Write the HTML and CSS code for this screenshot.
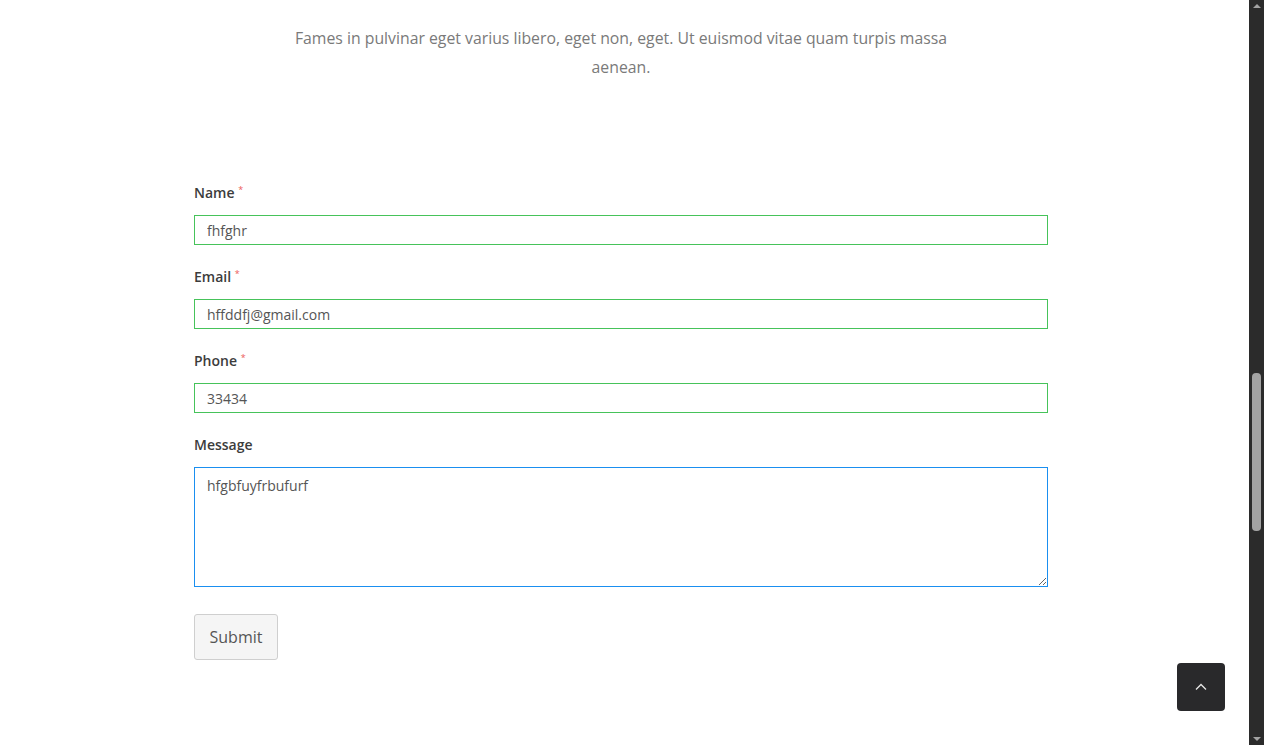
FILE: index.html
```html
<!DOCTYPE html>
<html lang="en">
<head>
<meta charset="utf-8">
<title>Contact</title>
<link rel="stylesheet" href="styles.css">
</head>
<body>
<div class="screen">
  <main class="page">
    <section class="intro">
      <p class="lead">Fames in pulvinar eget varius libero, eget non, eget. Ut euismod vitae quam turpis massa aenean.</p>
    </section>
    <form class="form">
      <div class="field">
        <label class="label">Name <span class="req">*</span></label>
        <input class="input valid" type="text" value="fhfghr">
      </div>
      <div class="field">
        <label class="label">Email <span class="req">*</span></label>
        <input class="input valid" type="text" value="hffddfj@gmail.com">
      </div>
      <div class="field">
        <label class="label">Phone <span class="req">*</span></label>
        <input class="input valid" type="text" value="33434">
      </div>
      <div class="field">
        <label class="label">Message</label>
        <textarea class="textarea">hfgbfuyfrbufurf</textarea>
      </div>
      <button class="submit" type="button">Submit</button>
    </form>
    <button class="to-top" type="button" aria-label="Back to top">
      <svg width="12" height="8" viewBox="0 0 12 8"><path d="M1 6.5 L6 1.5 L11 6.5" fill="none" stroke="#e6e6e6" stroke-width="1.3"/></svg>
    </button>
  </main>
  <div class="scrollbar">
    <div class="arrow up"></div>
    <div class="track"><div class="thumb"></div></div>
    <div class="arrow down"></div>
  </div>
</div>
</body>
</html>
```
FILE: styles.css
```css
html, body {
  margin: 0;
  padding: 0;
  height: 100%;
  background: #fff;
}
body {
  font-family: "Open Sans", Lato, "Liberation Sans", sans-serif;
  overflow: hidden;
}
.screen {
  display: flex;
  height: 745px;
}
.page {
  flex: 1;
  position: relative;
  padding: 0 201px 0 194px;
}
.intro {
  padding-top: 24px;
  display: flex;
  justify-content: center;
}
.lead {
  margin: 0;
  width: 680px;
  text-align: center;
  font-size: 15.8px;
  line-height: 29px;
  color: #7a7a7a;
}
.form {
  margin-top: 101px;
  display: flex;
  flex-direction: column;
  align-items: flex-start;
}
.field {
  width: 100%;
  margin-bottom: 22px;
  display: flex;
  flex-direction: column;
}
.label {
  font-size: 14px;
  font-weight: 600;
  line-height: 20px;
  color: #3c3c3c;
  margin-bottom: 12px;
}
.req {
  color: #ec5a5a;
  font-size: 9px;
  vertical-align: top;
  line-height: 14px;
  font-weight: 400;
}
.input, .textarea {
  box-sizing: border-box;
  width: 100%;
  font-family: inherit;
  font-size: 14px;
  color: #555;
  background: #fff;
  outline: none;
  margin: 0;
}
.input {
  height: 30px;
  padding: 0 12px;
  border: 1px solid #46c35a;
}
.textarea {
  height: 120px;
  padding: 8px 12px;
  border: 1px solid #1a8ff0;
  resize: vertical;
}
.submit {
  margin-top: 5px;
  width: 84px;
  height: 46px;
  background: #f5f5f5;
  border: 1px solid #cfcfcf;
  border-radius: 3px;
  font-family: inherit;
  font-size: 16px;
  color: #555;
  padding: 0;
}
.to-top {
  position: absolute;
  right: 24px;
  top: 663px;
  width: 48px;
  height: 48px;
  border: none;
  border-radius: 4px;
  background: #29292b;
  display: flex;
  align-items: center;
  justify-content: center;
  padding: 0;
}
.scrollbar {
  width: 15px;
  background: #2b2b2b;
  display: flex;
  flex-direction: column;
  align-items: center;
}
.arrow {
  width: 0;
  height: 0;
  border-left: 4px solid transparent;
  border-right: 4px solid transparent;
}
.arrow.up {
  margin-top: 4px;
  border-bottom: 4px solid #a3a3a3;
}
.arrow.down {
  margin-bottom: 4px;
  border-top: 4px solid #a3a3a3;
}
.track {
  flex: 1;
  width: 100%;
  display: flex;
  justify-content: center;
}
.thumb {
  margin-top: 365px;
  width: 9px;
  height: 158px;
  border-radius: 4px;
  background: #a3a3a3;
}
```
